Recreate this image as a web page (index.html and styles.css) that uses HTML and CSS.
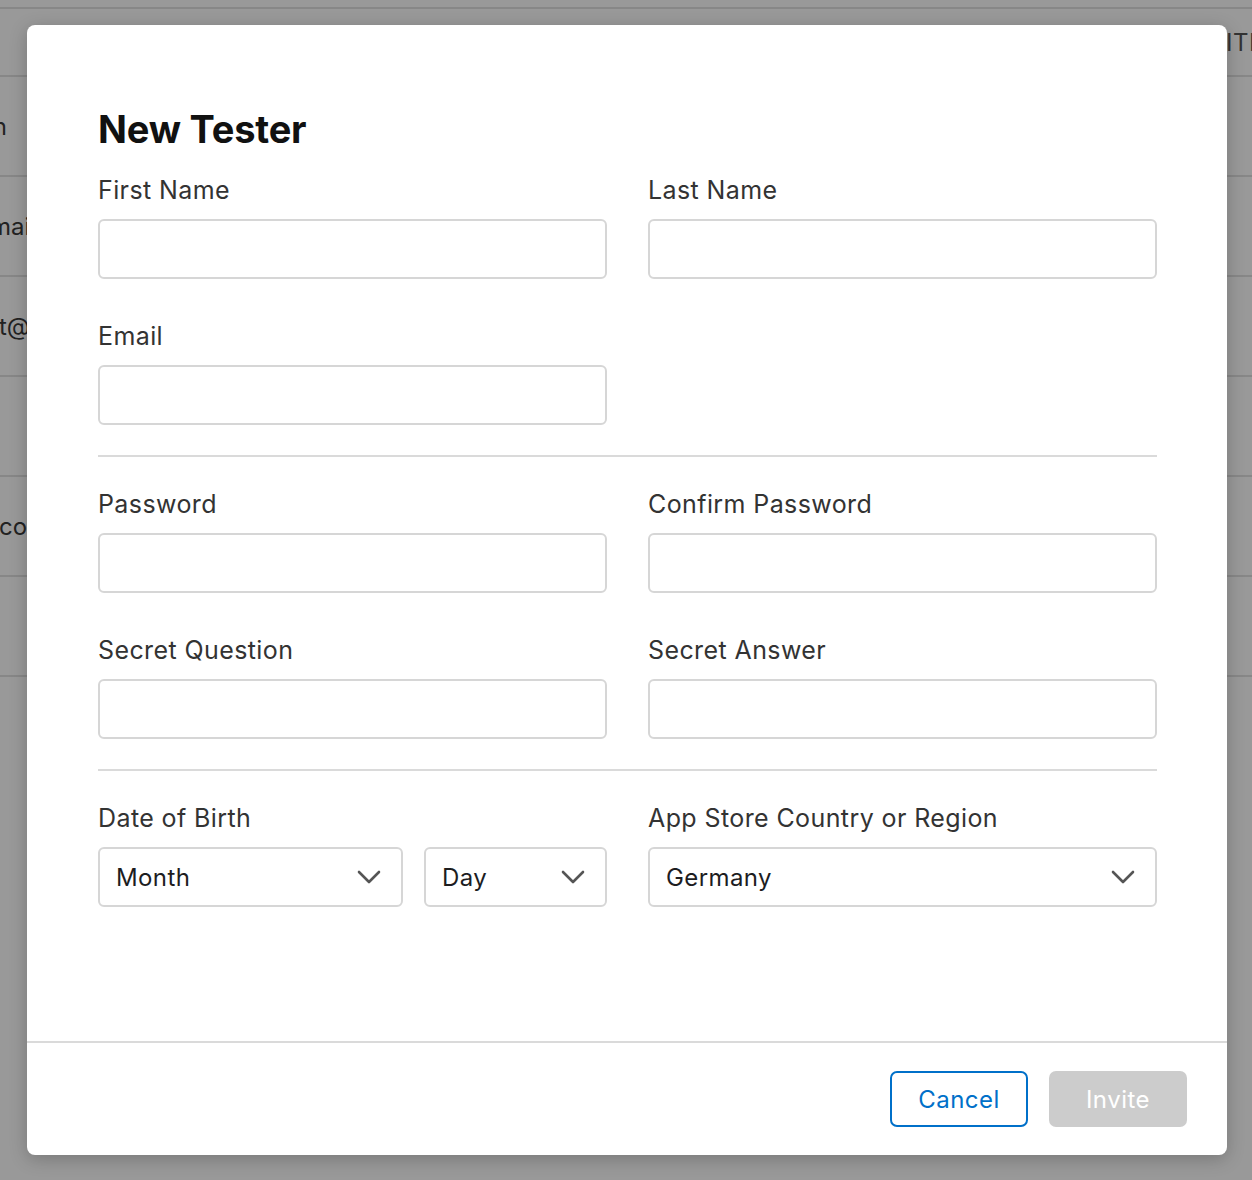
FILE: index.html
```html
<!DOCTYPE html>
<html lang="en">
<head>
<meta charset="utf-8">
<title>New Tester</title>
<link rel="stylesheet" href="styles.css">
</head>
<body>
<div class="page">
  <div class="table">
    <div class="row head"><span class="head-text">ITEMS</span></div>
    <div class="row"><div class="end-cell"><span>Jason</span></div></div>
    <div class="row"><span class="cell c-mail">email@example.com</span></div>
    <div class="row"><span class="cell c-at">t@example.com</span></div>
    <div class="row"></div>
    <div class="row"><span class="cell c-co">co@example.com</span></div>
    <div class="row last"></div>
  </div>
</div>
<div class="overlay"></div>
<div class="modal">
  <div class="modal-body">
    <h1 class="title">New Tester</h1>
    <div class="grid">
      <label class="field">
        <span class="label">First Name</span>
        <input class="input" type="text">
      </label>
      <label class="field">
        <span class="label">Last Name</span>
        <input class="input" type="text">
      </label>
      <label class="field">
        <span class="label">Email</span>
        <input class="input" type="text">
      </label>
    </div>
    <hr class="sep">
    <div class="grid">
      <label class="field">
        <span class="label">Password</span>
        <input class="input" type="password">
      </label>
      <label class="field">
        <span class="label">Confirm Password</span>
        <input class="input" type="password">
      </label>
      <label class="field">
        <span class="label">Secret Question</span>
        <input class="input" type="text">
      </label>
      <label class="field">
        <span class="label">Secret Answer</span>
        <input class="input" type="text">
      </label>
    </div>
    <hr class="sep">
    <div class="grid">
      <div class="field">
        <span class="label">Date of Birth</span>
        <div class="dob">
          <div class="select"><span>Month</span>
            <svg class="chev" viewBox="0 0 24 14" width="24" height="14"><polyline points="2,2 12,12 22,2" /></svg>
          </div>
          <div class="select"><span>Day</span>
            <svg class="chev" viewBox="0 0 24 14" width="24" height="14"><polyline points="2,2 12,12 22,2" /></svg>
          </div>
        </div>
      </div>
      <div class="field">
        <span class="label">App Store Country or Region</span>
        <div class="select"><span>Germany</span>
          <svg class="chev" viewBox="0 0 24 14" width="24" height="14"><polyline points="2,2 12,12 22,2" /></svg>
        </div>
      </div>
    </div>
  </div>
  <div class="modal-footer">
    <button class="btn btn-cancel" type="button">Cancel</button>
    <button class="btn btn-invite" type="button" disabled>Invite</button>
  </div>
</div>
</body>
</html>
```

FILE: styles.css
```css
* { box-sizing: border-box; }
html, body { margin: 0; padding: 0; }
body {
  width: 1252px;
  height: 1180px;
  overflow: hidden;
  background: #ffffff;
  font-family: Inter, "Noto Sans", "Liberation Sans", sans-serif;
  position: relative;
}

.page { padding-top: 7px; }
.table { display: flex; flex-direction: column; }
.row {
  height: 100px;
  border-top: 2px solid #e2e2e2;
  display: flex;
  align-items: center;
  font-size: 24px;
  color: #3a3a3a;
  white-space: nowrap;
  overflow: hidden;
}
.row.last { border-bottom: 2px solid #e2e2e2; height: 102px; }
.row.head { height: 68px; padding-left: 1226px; color: #555; }
.head-text { font-size: 24px; letter-spacing: 0.5px; }
.end-cell { width: 7px; display: flex; justify-content: flex-end; }
.c-mail { margin-left: -24px; }
.c-at { margin-left: -1px; }
.c-co { margin-left: -1px; }

.overlay {
  position: absolute;
  inset: 0;
  background: rgba(0, 0, 0, 0.4);
}

.modal {
  position: absolute;
  left: 27px;
  top: 25px;
  width: 1200px;
  height: 1130px;
  background: #fff;
  border-radius: 8px;
  box-shadow: 0 4px 18px rgba(0, 0, 0, 0.22);
  display: flex;
  flex-direction: column;
}
.modal-body {
  flex: 1;
  padding: 81px 70px 0 71px;
}
.title {
  margin: 0 0 23px;
  font-size: 38px;
  line-height: 46px;
  font-weight: 700;
  color: #111;
  letter-spacing: -0.2px;
}
.grid {
  display: grid;
  grid-template-columns: 1fr 1fr;
  column-gap: 41px;
  row-gap: 42px;
}
.field { display: flex; flex-direction: column; }
.label {
  font-size: 25px;
  line-height: 30px;
  color: #333;
  margin-bottom: 14px;
  letter-spacing: 0.4px;
}
.input {
  height: 60px;
  width: 100%;
  border: 2px solid #d6d6d6;
  border-radius: 6px;
  background: #fff;
  font: inherit;
  font-size: 24px;
  padding: 0 18px;
  outline: none;
}
.sep {
  border: 0;
  height: 2px;
  background: #dadada;
  margin: 30px 0 32px;
}
.dob {
  display: grid;
  grid-template-columns: 305px 1fr;
  column-gap: 21px;
}
.select {
  height: 60px;
  border: 2px solid #d6d6d6;
  border-radius: 6px;
  display: flex;
  align-items: center;
  justify-content: space-between;
  padding: 0 20px 0 16px;
  font-size: 24px;
  color: #1d1d1f;
  letter-spacing: 0.4px;
}
.chev { display: block; }
.chev polyline {
  fill: none;
  stroke: #555;
  stroke-width: 2.6;
  stroke-linecap: round;
  stroke-linejoin: round;
}

.modal-footer {
  border-top: 2px solid #dadada;
  padding: 28px 40px 28px;
  display: flex;
  justify-content: flex-end;
  gap: 21px;
}
.btn {
  width: 138px;
  height: 56px;
  border-radius: 7px;
  font-family: inherit;
  font-size: 24px;
  letter-spacing: 0.5px;
  padding: 0;
}
.btn-cancel {
  background: #fff;
  border: 2px solid #0070c9;
  color: #0070c9;
}
.btn-invite {
  background: #cccccc;
  border: 0;
  color: #fff;
}
```
